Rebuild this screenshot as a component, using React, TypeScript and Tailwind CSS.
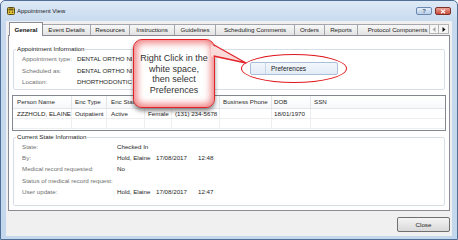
import React from "react";

const tabs = [
  { label: "Event Details", w: "w-[48px]" },
  { label: "Resources", w: "w-[39px]" },
  { label: "Instructions", w: "w-[45px]" },
  { label: "Guidelines", w: "w-[41px]" },
  { label: "Scheduling Comments", w: "w-[79px]" },
  { label: "Orders", w: "w-[30px]" },
  { label: "Reports", w: "w-[33px]" },
  { label: "Protocol Components", w: "w-[80px]" },
];

const cols = [
  { h: "Person Name", d: "ZZZHOLD, ELAINE", w: "w-[59px] pl-[4px]" },
  { h: "Enc Type", d: "Outpatient", w: "w-[35px] pl-[3px]" },
  { h: "Enc Status", d: "Active", w: "w-[38px] pl-[4px]" },
  { h: "Sex", d: "Female", w: "w-[27px] pl-[3px]" },
  { h: "Home Phone", d: "(131) 234-5678", w: "w-[48px] pl-[3px]" },
  { h: "Business Phone", d: "", w: "w-[52px] pl-[3px]" },
  { h: "DOB", d: "18/01/1970", w: "w-[39px] pl-[2px]" },
];

const appt = [
  ["Appointment type:", "DENTAL ORTHO NEW PATIENT"],
  ["Scheduled as:", "DENTAL ORTHO NEW PATIENT"],
  ["Location:", "DHORTHODONTICS"],
];

const state: [string, string, string, string][] = [
  ["State:", "Checked In", "", ""],
  ["By:", "Hold, Elaine", "17/08/2017", "12:48"],
  ["Medical record requested:", "No", "", ""],
  ["Status of medical record request:", "", "", ""],
  ["User update:", "Hold, Elaine", "17/08/2017", "12:47"],
];

export default function App() {
  return (
    <div className="relative w-[458px] h-[240px] overflow-hidden bg-white font-['Liberation_Sans',Arial,sans-serif] text-[6.2px] text-[#1e1e1e]">
      <div className="w-[458px] h-[240px] flex flex-col border border-[#4f6f96] rounded-t-[5px] bg-[linear-gradient(#dde9f6,#c6d9ee_22px,#c3d7ed)]">
        {/* title bar */}
        <div className="h-[20px] flex items-center pl-[6px] pr-[6px]">
          <svg width="8" height="8" viewBox="0 0 8 8">
            <rect x="0.5" y="0.5" width="7" height="7" rx="1" fill="#e9c83c" stroke="#5a4c18" />
            <rect x="1.5" y="1.5" width="5" height="2" fill="#6b5a1c" />
            <circle cx="2.5" cy="5.3" r="0.8" fill="#5a4c18" />
            <circle cx="5.5" cy="5.3" r="0.8" fill="#5a4c18" />
          </svg>
          <span className="ml-[2px] text-[6px] leading-[8px] text-[#1a1a1a]">Appointment View</span>
          <div className="flex-1" />
          <div className="w-[16px] h-[8px] rounded-[2px] border border-[#6b88ae] bg-[linear-gradient(#e4eef9,#b7cde6)] flex items-center justify-center text-[6px] leading-[6px] text-[#4b607c] font-bold">?</div>
          <div className="ml-[3px] w-[16px] h-[8px] rounded-[2px] border border-[#7e3128] bg-[linear-gradient(#eaa496,#c94b3c)] flex items-center justify-center">
            <svg width="6" height="5" viewBox="0 0 6 5">
              <path d="M1 0.6 L5 4.4 M5 0.6 L1 4.4" stroke="#ffffff" strokeWidth="1.3" />
            </svg>
          </div>
        </div>

        {/* client area */}
        <div className="mx-[5px] h-[215px] bg-[#f0f0f0] px-[2px] flex flex-col">
          {/* tab strip */}
          <div className="mt-[1px] h-[14px] -mb-[1px] flex items-end relative z-10">
            <div className="ml-[1px] w-[420px] h-[14px] overflow-hidden flex items-end">
              <div className="shrink-0 w-[34px] h-[14px] bg-white border-l border-t border-r border-[#898c95] flex items-center justify-center font-bold leading-[8px] text-[#111]">
                General
              </div>
              {tabs.map((t) => (
                <div
                  key={t.label}
                  className={`shrink-0 ${t.w} h-[11px] mb-[1px] border-t border-r border-[#a3a6ad] bg-[linear-gradient(#f7f7f7,#e3e3e3)] flex items-center justify-center whitespace-nowrap overflow-hidden leading-[8px] text-[#222]`}
                >
                  {t.label}
                </div>
              ))}
            </div>
            <div className="mb-[2px] flex">
              <div className="w-[10px] h-[10px] border border-[#b5b5b5] bg-[#f6f6f6] flex items-center justify-center">
                <svg width="4" height="5" viewBox="0 0 4 5">
                  <path d="M3.5 0 L0.5 2.5 L3.5 5 Z" fill="#a8a8a8" />
                </svg>
              </div>
              <div className="w-[10px] h-[10px] border-t border-r border-b border-[#b5b5b5] bg-[#f6f6f6] flex items-center justify-center">
                <svg width="4" height="5" viewBox="0 0 4 5">
                  <path d="M0.5 0 L3.5 2.5 L0.5 5 Z" fill="#111" />
                </svg>
              </div>
            </div>
          </div>

          {/* tab panel */}
          <div className="h-[176px] border border-[#898c95] bg-white pt-[9px] px-[4px] flex flex-col">
            <fieldset className="border border-[#d5dfe5] rounded-[2px] pl-[2px] pb-[1px] min-w-0">
              <legend className="px-[1px] leading-[8px] text-[#222]">Appointment Information</legend>
              {appt.map((r) => (
                <div key={r[0]} className="ml-[6px] h-[11.5px] leading-[11.5px] flex whitespace-nowrap">
                  <span className="w-[55px] text-[#707070]">{r[0]}</span>
                  <span className="w-[55px] overflow-hidden text-[#1e1e1e]">{r[1]}</span>
                </div>
              ))}
            </fieldset>

            <div className="mt-[5.5px] -mx-[1px] h-[36px] border border-[#828790] flex flex-col">
              <div className="h-[13px] flex border-b border-[#e3e6ea] bg-[linear-gradient(#ffffff,#f7f8fa)]">
                {cols.map((c) => (
                  <div key={c.h} className={`${c.w} shrink-0 border-r border-[#e3e5e8] leading-[12px] whitespace-nowrap overflow-hidden text-[#2a2a2a]`}>
                    {c.h}
                  </div>
                ))}
                <div className="flex-1 pl-[3px] leading-[12px] text-[#2a2a2a]">SSN</div>
              </div>
              {[0, 1].map((i) => (
                <div key={i} className="h-[10px] flex border-b border-[#eceef0]">
                  {cols.map((c) => (
                    <div key={c.h} className={`${c.w} shrink-0 border-r border-[#eceef0] leading-[9px] whitespace-nowrap overflow-hidden`}>
                      {i === 0 ? c.d : ""}
                    </div>
                  ))}
                  <div className="flex-1" />
                </div>
              ))}
            </div>

            <fieldset className="mt-[2px] border border-[#d5dfe5] rounded-[2px] pl-[2px] pb-[8px] min-w-0">
              <legend className="px-[1px] leading-[8px] text-[#222]">Current State Information</legend>
              {state.map((r) => (
                <div key={r[0]} className="ml-[6px] h-[11.2px] leading-[11.2px] flex whitespace-nowrap">
                  <span className="w-[95px] text-[#707070]">{r[0]}</span>
                  <span className="w-[39px]">{r[1]}</span>
                  <span className="w-[42px]">{r[2]}</span>
                  <span>{r[3]}</span>
                </div>
              ))}
            </fieldset>
          </div>

          <div className="mt-[6px] flex justify-end">
            <div className="w-[53px] h-[15px] rounded-[2px] border border-[#707070] bg-[linear-gradient(#f4f4f4,#e6e6e6_50%,#d9d9d9)] flex items-center justify-center leading-[8px] text-[#1a1a1a]">
              Close
            </div>
          </div>
        </div>
      </div>

      {/* context menu item */}
      <div className="absolute left-[250px] top-[62px] w-[88px] h-[13px] rounded-[2px] border border-[#aac0da] bg-[linear-gradient(#f3f7fc,#e2ebf6)] flex items-center">
        <div className="w-[15px] h-full border-r border-[#c8d5e4]" />
        <span className="ml-[5px] text-[6.5px] leading-[8px] text-[#1a1a1a]">Preferences</span>
      </div>

      {/* red ellipse */}
      <div className="absolute left-[241px] top-[54px] w-[106px] h-[29px] rounded-[50%] border-[1.5px] border-[#e0161c]" />

      {/* callout */}
      <div className="absolute left-[133px] top-[39px] w-[82px] h-[69px] rounded-[9px] border-[1.5px] border-[#e2242a] bg-white shadow-[inset_0_0_7px_3px_rgba(236,96,96,0.8),0_3px_4px_rgba(0,0,0,0.45)] pt-[13px] text-center text-[9px] leading-[10.7px] text-[#333]">
        <div>Right Click in the</div>
        <div>white space,</div>
        <div>then select</div>
        <div>Preferences</div>
      </div>
      <svg className="absolute left-0 top-0 pointer-events-none" width="458" height="240" viewBox="0 0 458 240">
        <polygon points="211,44.5 246,63 211,56.5" fill="#fbdada" />
        <polyline points="213.6,44.8 246,63 213.6,56" fill="none" stroke="#e2242a" strokeWidth="1.3" strokeLinejoin="round" />
      </svg>
    </div>
  );
}
